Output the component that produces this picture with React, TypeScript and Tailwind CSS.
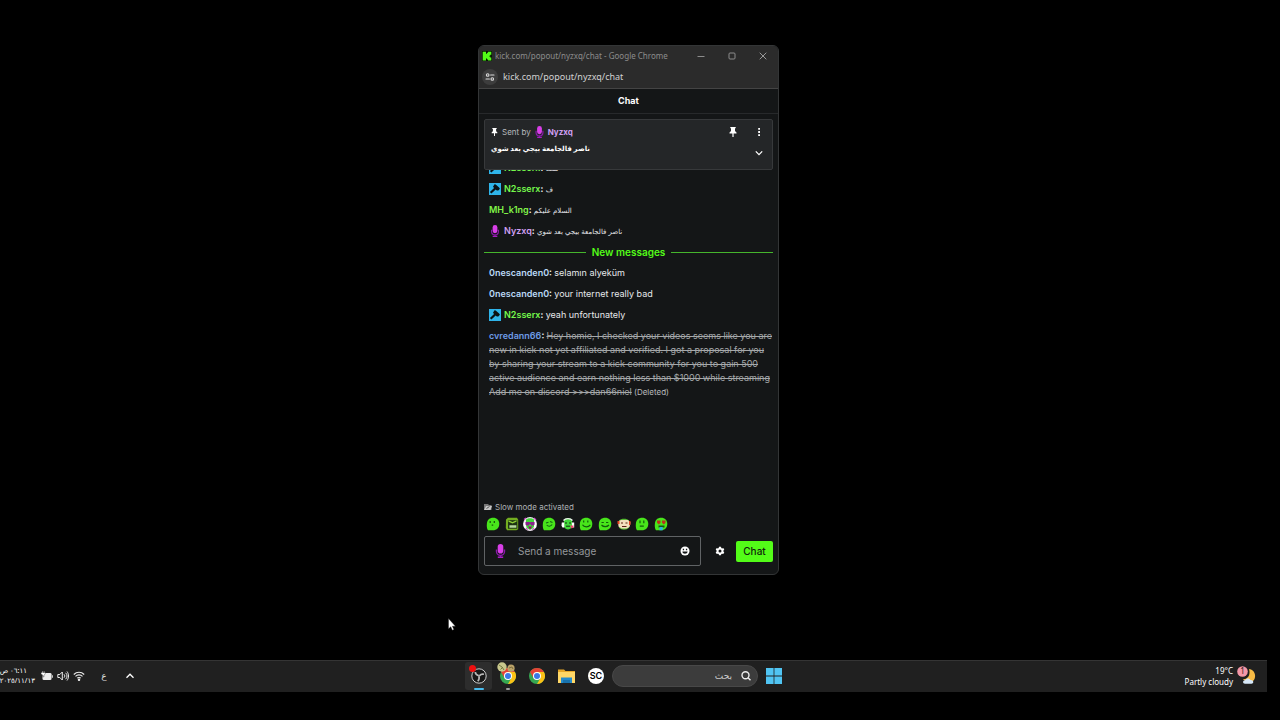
import React from "react";

const INTER = "font-['Inter','DejaVu_Sans',sans-serif]";

function KickLogo() {
  return (
    <svg viewBox="0 0 10 10" className="h-[10px] w-[10px] shrink-0" aria-hidden="true">
      <path fill="#071804" d="M0 0h10v10H0z" />
      <path fill="#53fc18" d="M.7.700h3.300v2h1v-1h1v-1h3.300v3H8.200v1H7.200v.8h1v1h1.100v2.900H6v-1H5v-1H4v2H.7z" />
    </svg>
  );
}

function TuneIcon() {
  return (
    <svg viewBox="0 0 10 10" className="h-[10px] w-[10px]" fill="none" stroke="#dcdcdc" strokeWidth="1.100" strokeLinecap="round" aria-hidden="true">
      <circle cx="2.700" cy="3" r="1.300" />
      <path d="M5.600 3H9M1 7h3.400" />
      <circle cx="7.300" cy="7" r="1.300" />
    </svg>
  );
}

function Pin({ className }: { className: string }) {
  return (
    <svg viewBox="0 0 8 10" className={className} fill="#fff" aria-hidden="true">
      <path d="M1.300 0h5.400v1.300H6v2.800l1.500 1.300v1.200H4.600V10H3.400V6.600H.500V5.400L2 4.100V1.300h-.7z" />
    </svg>
  );
}

function Mic({ className }: { className: string }) {
  return (
    <svg viewBox="0 0 10 14" className={className} aria-hidden="true">
      <rect x="2.200" y="0" width="5.600" height="9.500" rx="2.800" fill="#d93fe8" />
      <path d="M1 5.500v2a4 4 0 0 0 8 0v-2M5 11.500V13" fill="none" stroke="#8a18aa" strokeWidth="1.400" />
      <path d="M2.300 12.600h5.400V14H2.300z" fill="#a91bc4" />
    </svg>
  );
}

function Mod() {
  return (
    <svg viewBox="0 0 12 12" className="mr-[3px] inline-block h-3 w-3 align-[-3px]" aria-label="Moderator" role="img">
      <path fill="#2fb4e9" d="M0 0h12v12H0z" />
      <path fill="#0b1114" d="M5.500 1.200 6.700 1.600l3.400 2.800.8 1.400-1.600 1.800-1.500-.2-1.100-1-4.300 4.200-1.500-1.500 4.200-4-1.100-1.400z" />
    </svg>
  );
}

type Face = "stare" | "angry" | "shades" | "wink" | "phones" | "smile" | "grin" | "glove" | "think" | "love";

const BLOB = "M2 13.300C.8 11.500 .6 8.900.9 6.400 1.300 2.800 3.600.7 7.200.7c3.700 0 6.100 2.600 6.100 6 0 3.800-2.300 6.600-6.500 6.600z";

function Emote({ face }: { face: Face }) {
  return (
    <svg viewBox="0 0 14 14" className="h-[14px] w-[14px]" aria-hidden="true">
      {face === "angry" ? (
        <>
          <path d="M1 2.500 3 .8h9l1.200 2v9.500l-1.800 1H2L.8 11z" fill="#73ad20" />
          <path d="M3 3.200h9.300v8.500H3z" fill="#1d3413" />
          <path d="M3.500 3.200 7.500 5l4-1.800v1.500L7.500 6.500l-4-1.800z" fill="#8fcf35" />
          <path d="M4.400 8.300h7v2.500h-7z" fill="#b7d9a0" />
        </>
      ) : face === "shades" || face === "phones" ? (
        <>
          <circle cx="7" cy="7" r={face === "shades" ? 6.9 : 5.800} fill={face === "shades" ? "#f3e8f4" : "#152218"} />
          <path d="M3 2.500c2-1.700 6-1.700 8 0v7c-1.500 4-6.500 4-8 0z" fill="#41d83a" />
          <path d="M.8 5.500h2.500v5H1.500L.5 8.800zM10.700 5.500h2.500v5h-2z" fill="#fff" />
          {face === "shades" ? (
            <>
              <path d="M2.500 5h4l.5.8.6-.8h4v2.500l-1 1H8.300L7 6.800 5.700 8.500H3.300l-.8-1z" fill="#8a1f8d" />
              <path d="M5 9.500h4.200L7 12.700z" fill="#8d1266" />
              <path d="M1 2.500 3 1M11 1l2 2M11 11l-1.500 2M3 11l1.500 2" stroke="#cc4cc5" strokeWidth="1.200" />
            </>
          ) : (
            <>
              <path d="M2.500 3.500c2-2.500 7-2.500 9 0" fill="none" stroke="#eee" strokeWidth="1.300" />
              <path d="M4 6h2M8 6h2M5 9.200h4" stroke="#14310f" />
              <path d="M9 8.500h3.500v2l-2 1z" fill="#ec4770" />
            </>
          )}
        </>
      ) : face === "glove" ? (
        <>
          <path d="M2 3.500C4 1 10 1 12 3.500v7c-2 3-8 3-10 0z" fill="#55b932" />
          <path d="M1 4.500 4 3h7l2.500 2.500-1 4.500-3 1.500h-5L1.500 9.500z" fill="#f2dfbd" />
          <path d="M4 6h2M8.500 6h2M5 9.500h4.500" stroke="#592313" strokeWidth="1.200" />
          <path d="M.5 4h2v3h-2zM12 4h1.500v4H12z" fill="#e54724" />
        </>
      ) : (
        <>
          <path d={BLOB} fill="#48e51b" />
          {face === "stare" && <path d="M4.200 4v2M8.300 4v2M5.700 8.200h1.500" stroke="#12520b" strokeWidth="1.200" />}
          {face === "wink" && <path d="M4 6l2.500-.7M8 4.500l2.500 1M4.700 8c1.500 1.800 4 1.500 5.500-.5" fill="none" stroke="#126212" strokeWidth="1.100" />}
          {face === "smile" && <path d="M4.700 3.500v2M8.800 3.500v2M3.500 7.800c1.500 2.700 6 2.700 7.800 0" fill="none" stroke="#125b0b" strokeWidth="1.200" />}
          {face === "grin" && <path d="M3.500 5.500h2.300M8 5.500h2.300M3.500 8c2 2.200 5.500 2.200 7.500 0" fill="none" stroke="#125b0b" strokeWidth="1.200" />}
          {face === "think" && <path d="M5 3.500v2.800M8.800 3.500v2.800M4.800 9.200h4" fill="none" stroke="#125b0b" strokeWidth="1.200" />}
          {face === "love" && (
            <>
              <path d="M3 3.500h3.500v2.300L4.800 7.500 3 5.800zM8 3.500h3.500v2.300L9.800 7.500 8 5.800z" fill="#bd321c" />
              <path d="M4.500 8.500h6v2h-6z" fill="#185712" />
              <path d="M5.500 10h3.200v3.300H5.500z" fill="#2ab4de" />
            </>
          )}
        </>
      )}
    </svg>
  );
}

const faces: Face[] = ["stare", "angry", "shades", "wink", "phones", "smile", "grin", "glove", "think", "love"];

function Name({ children, className }: { children: string; className: string }) {
  return (
    <>
      <span className={`font-semibold ${className}`}>{children}</span>
      <span className="font-semibold text-white">: </span>
    </>
  );
}

function Arabic({ children }: { children: string }) {
  return <bdi className="text-[7px]">{children}</bdi>;
}

function ChatWindow() {
  return (
    <section
      className={`absolute left-[478px] top-[45px] flex h-[530px] w-[301px] flex-col overflow-hidden rounded-[6px] border border-[#333536] bg-[#141617] text-[9px] leading-[14px] text-[#e6e8ea] ${INTER}`}
    >
      <header className="border-b border-[#444] bg-[#2b2b2b] font-['Noto_Sans',sans-serif]">
        <div className="flex h-5 items-center pl-[3px] pr-[11px]">
          <KickLogo />
          <h1 className="ml-[3px] flex-1 text-[8px] text-[#8c8c8c]">kick.com/popout/nyzxq/chat - Google Chrome</h1>
          <div className="flex gap-[23px]">
            <button aria-label="Minimize">
              <svg viewBox="0 0 8 8" className="h-2 w-2" stroke="#8c8c8c" fill="none"><path d="M.5 4.500h7" /></svg>
            </button>
            <button aria-label="Maximize">
              <svg viewBox="0 0 8 8" className="h-2 w-2" stroke="#8c8c8c" fill="none"><rect x="1" y="1" width="6" height="6" rx="1" /></svg>
            </button>
            <button aria-label="Close">
              <svg viewBox="0 0 8 8" className="h-2 w-2" stroke="#999" fill="none"><path d="m.7.700 6.600 6.600M7.300.700.700 7.300" /></svg>
            </button>
          </div>
        </div>
        <div className="flex h-[22px] items-center gap-[5px] pl-[3px]">
          <button aria-label="View site information" className="flex h-4 w-4 items-center justify-center rounded-full bg-[#3d3d3d]">
            <TuneIcon />
          </button>
          <span className="text-[9px] text-[#d2d2d2]">kick.com/popout/nyzxq/chat</span>
        </div>
      </header>

      <h2 className="flex h-[25px] items-center justify-center border-b border-[#27292b] text-[9px] font-bold text-white">Chat</h2>

      <div className="mx-[5px] mt-[5px] flex h-[51px] shrink-0 flex-col rounded-[2px] border border-[#37393b] bg-[#242628] px-[6px] pt-[5px]">
        <div className="flex items-center">
          <Pin className="mr-1 h-2 w-[7px]" />
          <span className="text-[8px] text-[#b6babd]">Sent by</span>
          <Mic className="mx-1 h-3 w-[9px]" />
          <span className="flex-1 text-[8px] font-bold text-[#cf9ff2]">Nyzxq</span>
          <button aria-label="Unpin message" className="mr-[18px]"><Pin className="h-[10px] w-2" /></button>
          <button aria-label="More options" className="mr-[3px]">
            <svg viewBox="0 0 8 10" className="h-[10px] w-2" fill="#fff"><path d="M3.200 1h1.800v1.800H3.200zM3.200 4.100h1.800v1.800H3.200zM3.200 7.200h1.800V9H3.200z" /></svg>
          </button>
        </div>
        <div className="mt-[3px] flex justify-between">
          <p dir="rtl" className="text-[7px] font-bold text-white">ناصر فالجامعة بيجي بعد شوي</p>
          <button aria-label="Expand" className="mr-[3px] mt-[7px]">
            <svg viewBox="0 0 8 8" className="h-2 w-2" fill="none" stroke="#fff" strokeWidth="1.300"><path d="m.8 2.400 3.200 3.200 3.200-3.200" /></svg>
          </button>
        </div>
      </div>

      <div className="min-h-0 flex-1 overflow-hidden">
        <ul className="-mt-[9px] flex flex-col gap-[7px] pl-[10px] pr-[5px]">
          <li className="h-[14px]"><Mod /><Name className="text-[#75f94c]">N2sserx</Name><Arabic>ست</Arabic></li>
          <li className="h-[14px]"><Mod /><Name className="text-[#75f94c]">N2sserx</Name><Arabic>ف</Arabic></li>
          <li className="h-[14px]"><Name className="text-[#83f548]">MH_k1ng</Name><Arabic>السلام عليكم</Arabic></li>
          <li className="h-[14px]"><Mic className="mr-[3px] inline-block h-3 w-3 align-[-3px]" /><Name className="text-[#cf9ff2]">Nyzxq</Name><Arabic>ناصر فالجامعة بيجي بعد شوي</Arabic></li>
          <li className="-ml-[5px] flex items-center gap-[6px] text-[10px] font-semibold text-[#53fc18] before:h-px before:flex-1 before:bg-[#45b52c] after:h-px after:flex-1 after:bg-[#45b52c]">New messages</li>
          <li><Name className="text-[#bad8f5]">0nescanden0</Name>selamın alyeküm</li>
          <li><Name className="text-[#bad8f5]">0nescanden0</Name>your internet really bad</li>
          <li className="h-[14px]"><Mod /><Name className="text-[#75f94c]">N2sserx</Name>yeah unfortunately</li>
          <li>
            <Name className="text-[#6d9be6]">cvredann66</Name>
            <s className="text-[#a5a8aa]">Hey homie, I checked your videos seems like you are new in kick not yet affiliated and verified. I got a proposal for you by sharing your stream to a kick community for you to gain 500 active audience and earn nothing less than $1000 while streaming Add me on discord &gt;&gt;&gt;dan66niel</s>
            <span className="text-[8px] text-[#b9bbbd]"> (Deleted)</span>
          </li>
        </ul>
      </div>

      <footer className="px-[5px] pb-2">
        <p className="flex items-center gap-[3px] text-[8px] text-[#aeb2b5]">
          <svg viewBox="0 0 8 8" className="h-2 w-2" aria-hidden="true">
            <path d="M0 1h4l1 1h2.500v5H0z" fill="#777" /><path d="M0 7l2-4h6L6.500 7z" fill="#c5c5c5" /><path d="m2.500 5.500 3-2" stroke="#555" />
          </svg>
          Slow mode activated
        </p>
        <div className="ml-[2px] mt-[3px] flex w-[182px] justify-between">
          {faces.map((f) => (
            <button key={f} aria-label={f}><Emote face={f} /></button>
          ))}
        </div>
        <form className="mt-[5px] flex items-center" onSubmit={(e) => e.preventDefault()}>
          <div className="flex h-[30px] min-w-0 flex-1 items-center rounded-[2px] border border-[#606365] px-[10px]">
            <Mic className="h-[14px] w-[11px] shrink-0" />
            <input aria-label="Send a message" placeholder="Send a message" className="ml-3 min-w-0 flex-1 bg-transparent text-[10px] text-white outline-none placeholder:text-[#94989b]" />
            <button type="button" aria-label="Emotes">
              <svg viewBox="0 0 10 10" className="h-[10px] w-[10px]">
                <circle cx="5" cy="5" r="4.500" fill="#fff" />
                <path d="M2.800 2.800h1.300v1.500H2.800zM5.900 2.800h1.300v1.500H5.900zM2.400 5.500h5.200c0 3-5.200 3-5.200 0" fill="#141617" />
              </svg>
            </button>
          </div>
          <button type="button" aria-label="Settings" className="ml-[14px] mr-[11px]">
            <svg viewBox="0 0 10 10" className="h-[10px] w-[10px]">
              <path fill="#fff" fillRule="evenodd" d="M4 .7h2l.3 1.200.8.5 1.200-.4 1 1.700-.9.9v.8l.9.900-1 1.700-1.200-.3-.8.400L6 9.300H4l-.3-1.200-.8-.4-1.200.3-1-1.700.9-.9v-.8l-.9-.9 1-1.700 1.200.4.8-.5zM5 3.500a1.500 1.500 0 1 0 0 3 1.500 1.500 0 0 0 0-3" />
            </svg>
          </button>
          <button type="submit" className="h-[21px] w-[37px] rounded-[2px] bg-[#53fc18] text-[10px] font-medium text-[#10240b]">Chat</button>
        </form>
      </footer>
    </section>
  );
}

function Chrome() {
  return (
    <svg viewBox="0 0 16 16" className="h-4 w-4" aria-hidden="true">
      <circle cx="8" cy="8" r="8" fill="#36a852" />
      <path d="M1.070 4A8 8 0 0 1 14.930 4H8L4.540 10z" fill="#e44335" />
      <path d="M14.930 4A8 8 0 0 1 8 16l3.460-6L8 4z" fill="#fbc116" />
      <circle cx="8" cy="8" r="4" fill="#fff" />
      <circle cx="8" cy="8" r="3" fill="#3979e6" />
    </svg>
  );
}

function Taskbar() {
  return (
    <nav
      aria-label="Taskbar"
      className="mr-[13px] grid h-8 shrink-0 grid-cols-[465px_auto_1fr] items-center overflow-hidden border-t border-[#343434] bg-[#202020] pb-[2px] text-[8px] text-white font-['Noto_Sans','DejaVu_Sans',sans-serif]"
    >
      <div className="flex items-center">
        <time dir="rtl" className="flex w-[35px] flex-col whitespace-nowrap text-[7px] leading-[10px]">
          <span className="pr-2">٠٦:١١ ص</span>
          <span>٢٠٢٥/١١/١٣</span>
        </time>
        <div className="ml-[6px] flex items-center gap-1">
          <svg viewBox="0 0 12 12" className="h-3 w-3" aria-label="Battery" role="img">
            <rect x="1.500" y="3" width="9" height="7" rx="1.300" fill="#ececec" /><path d="M10.800 5.300h1v2.400h-1z" fill="#ececec" />
            <path d="M0 2.500h1V1h.8v1.500h.9V1h.8v1.500h.7v1.300L3 5.300v1.500H2V5.300L0 4z" fill="#fff" stroke="#202020" strokeWidth=".4" />
          </svg>
          <svg viewBox="0 0 12 12" className="h-3 w-3" fill="none" stroke="#ececec" strokeLinejoin="round" aria-label="Volume" role="img">
            <path d="M.8 4.500h2L5.300 2v8L2.800 7.500h-2zM7 4.300c1 1 1 2.400 0 3.400M8.600 2.800c1.900 1.900 1.900 4.500 0 6.400M10 1.500c2 2.700 2 6.300 0 9" />
          </svg>
          <svg viewBox="0 0 12 12" className="h-3 w-3" fill="none" stroke="#ececec" strokeWidth="1.100" aria-label="Wi-Fi" role="img">
            <path d="M.8 4.500c3-3 7.400-3 10.400 0M2.500 6.400c2-2 5-2 7 0M4.200 8.200c1-1 2.600-1 3.600 0" /><circle cx="6" cy="9.700" r=".7" fill="#fff" />
          </svg>
        </div>
        <button aria-label="Input language" className="ml-[13px] w-3 text-[9px] text-[#ddd]">ع</button>
        <button aria-label="Show hidden icons" className="ml-[15px]">
          <svg viewBox="0 0 10 10" className="h-[10px] w-[10px]" fill="none" stroke="#fff" strokeWidth="1.300"><path d="M1.500 6.700 5 3.200l3.500 3.500" /></svg>
        </button>
      </div>

      <div className="flex items-center">
        <button aria-label="OBS Studio" className="relative flex h-7 w-[27px] items-center justify-center rounded-[3px] bg-[#2d2d2d]">
          <svg viewBox="0 0 16 16" className="h-4 w-4">
            <circle cx="8" cy="8" r="7.200" fill="#181818" stroke="#ccc" />
            <path d="M7.800 7.800C5.800 7.200 4.300 5.600 4.300 4M8.300 7.800c1.500-1.600 3-2 4.700-1.500M8 8.200c.4 2 0 3.800-1.300 5" fill="none" stroke="#b9b9b9" strokeWidth="1.700" />
          </svg>
          <span className="absolute left-1 top-[3px] h-[7px] w-[7px] rounded-full bg-[#ee1010]" />
          <span className="absolute bottom-0 h-[2px] w-[10px] rounded-full bg-[#49bbed]" />
        </button>
        <button aria-label="Google Chrome, profile" className="relative ml-2 flex h-7 w-4 items-center justify-center">
          <Chrome />
          <svg viewBox="0 0 18 10" className="absolute -left-[3px] top-0 h-[10px] w-[18px]">
            <circle cx="5" cy="5" r="4.700" fill="#c8c78c" /><path d="m2 3 3 2 2 3M3.500 7.500 6 5" fill="none" stroke="#747a41" />
            <circle cx="14" cy="6.200" r="3.600" fill="#bba369" /><path d="m12 6 3-1 1 2" stroke="#7d6f40" fill="none" />
          </svg>
          <span className="absolute bottom-0 h-[2px] w-1 rounded-full bg-[#a0a0a0]" />
        </button>
        <button aria-label="Google Chrome" className="ml-[13px]"><Chrome /></button>
        <button aria-label="File Explorer" className="ml-[13px]">
          <svg viewBox="0 0 17 16" className="h-4 w-[17px]">
            <path d="M0 1.500h6L7.500 3H17v12H0z" fill="#e7a828" /><path d="M0 4h17v11H0z" fill="#ffd766" />
            <path d="M3 9.500h11V15H3z" fill="#258bcb" /><path d="M5 12h7v3H5z" fill="#1872ac" />
          </svg>
        </button>
        <button aria-label="SC" className="ml-[13px] flex h-4 w-4 items-center justify-center rounded-full bg-white text-[9px] font-semibold leading-none text-black font-['Inter',sans-serif]">SC</button>
        <label dir="rtl" className="ml-2 flex h-[22px] w-[146px] items-center gap-[9px] rounded-full border border-[#484848] bg-[#3c3c3c] pr-[6px]">
          <svg viewBox="0 0 10 10" className="h-[10px] w-[10px] shrink-0" fill="none" stroke="#eee" strokeWidth="1.400" aria-hidden="true"><circle cx="4.500" cy="4.300" r="3.500" /><path d="m7 6.800 2.500 2.500" /></svg>
          <input aria-label="بحث" placeholder="بحث" className="w-24 bg-transparent text-[9px] outline-none placeholder:text-[#ccc]" />
        </label>
        <button aria-label="Start" className="ml-2">
          <svg viewBox="0 0 16 16" className="h-4 w-4"><path d="M0 0h7.600v7.600H0zM8.400 0H16v7.600H8.400zM0 8.400h7.600V16H0zM8.400 8.400H16V16H8.400z" fill="#50c4f2" /></svg>
        </button>
      </div>

      <button className="mr-[10px] flex items-center gap-1 justify-self-end text-right">
        <span className="flex flex-col leading-[11px]">
          <span>19°C</span>
          <span>Partly cloudy</span>
        </span>
        <svg viewBox="0 0 20 20" className="h-5 w-5" role="img" aria-label="Partly cloudy night">
          <path d="M12 3c6 1 7.500 7 5 11-3 3.500-9 2.500-11-1 4 .5 8-3 6-10" fill="#f8bb44" />
          <path d="M8 17.800c-2.500 0-2.500-3.500 0-3.500 1-2.500 4.500-2.500 5.500-.3 3-.5 4 3.500 1 3.800z" fill="#d6e7f7" />
          <circle cx="5.500" cy="5.500" r="5.300" fill="#f497a7" />
          <text x="5.500" y="8.200" textAnchor="middle" fontSize="8" fill="#2c1719">1</text>
        </svg>
      </button>
    </nav>
  );
}

export default function App() {
  return (
    <div className="relative flex h-screen flex-col overflow-hidden bg-black pb-7">
      <main className="flex-1">
        <ChatWindow />
      </main>
      <Taskbar />
      <svg viewBox="0 0 8 13" className="absolute left-[448px] top-[618px] h-[13px] w-2" aria-hidden="true">
        <path d="M.5.500v10.300l2.300-2.100 1.500 3.500 1.600-.7-1.500-3.300h3z" fill="#fff" stroke="#222" strokeWidth=".4" />
      </svg>
    </div>
  );
}
